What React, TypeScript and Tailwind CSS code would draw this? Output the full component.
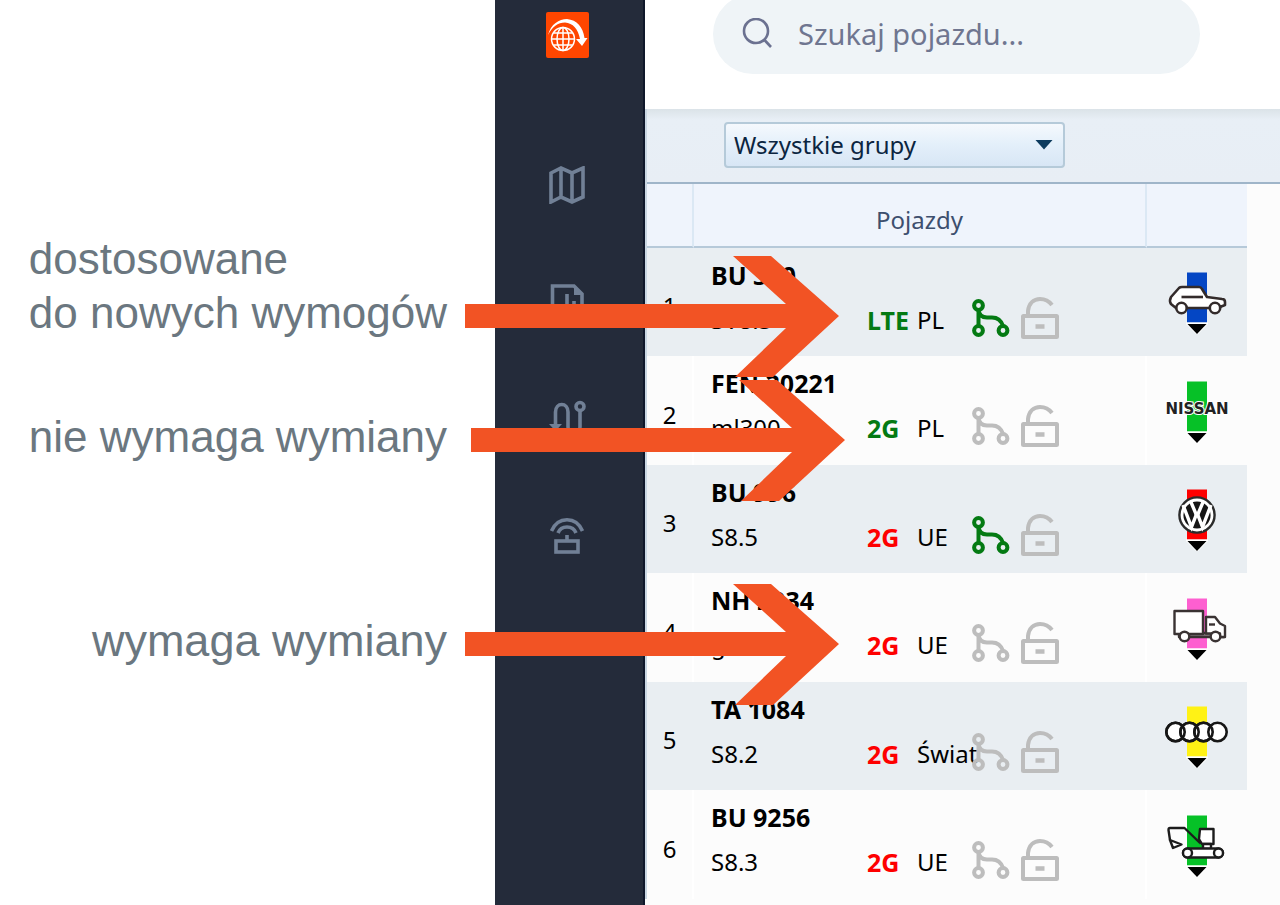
import type { ReactNode } from "react";
import clsx from "clsx";

type Vehicle = {
  name: string;
  model: string;
  network: string;
  region: string;
  ready: boolean;
  shared: boolean;
  color: string;
  icon: ReactNode;
};

const CarIcon = () => (
  <g fill="#fff" stroke="#332b2b" strokeWidth="2.6" strokeLinejoin="round">
    <path d="M14 38 L9 34 Q7 31 9 27 L17 18 Q18 17 20 17 H37 Q39 17 40 19 L45 27 L60 29 Q63 29 63 32 V35 L58 37 L53 38 Z" />
    <path d="M19.500 27 H41" />
    <circle cx="19.500" cy="38" r="5.200" />
    <circle cx="53" cy="38" r="5.200" />
  </g>
);

const NissanIcon = () => (
  <text
    x="35"
    y="35"
    textAnchor="middle"
    fill="#222"
    stroke="#fff"
    strokeWidth="2"
    paintOrder="stroke"
    className="font-['DejaVu_Sans',sans-serif] text-[15px] font-bold"
  >
    NISSAN
  </text>
);

const VolkswagenIcon = () => (
  <g fill="none" stroke="#fff" strokeWidth="3.4">
    <circle cx="35" cy="28" r="17.600" fill="#fff" stroke="#2b2b2b" strokeWidth="2.4" />
    <circle cx="35" cy="28" r="13.600" fill="#151515" stroke="none" />
    <path d="M28.500 14 L34 27 H36 L41.500 14" />
    <path d="M21 18 L29.500 40 L34 28.500 H36 L40.500 40 L49 18" />
  </g>
);

const TruckIcon = () => (
  <g fill="#fff" stroke="#3a3333" strokeWidth="2.4" strokeLinejoin="round">
    <path d="M17 37 H62 V41 H17 Z" fill="#8a8085" />
    <path d="M12.500 15 H41 V38 H12.500 Z" />
    <path d="M44 37.500 V21 H53 L58 27.500 L63 30 V41 H58 V37.500 Z" />
    <path d="M47 28.500 H53" />
    <circle cx="22.500" cy="40.500" r="4.800" />
    <circle cx="53.500" cy="40.500" r="4.800" />
  </g>
);

const AudiIcon = () => (
  <g stroke="#161616" strokeWidth="2.6">
    <g fill="#fff">
      <circle cx="13.500" cy="28" r="9.200" />
      <circle cx="27.500" cy="28" r="9.200" />
      <circle cx="41.500" cy="28" r="9.200" />
      <circle cx="55.500" cy="28" r="9.200" />
    </g>
    <g fill="none">
      <circle cx="13.500" cy="28" r="9.200" />
      <circle cx="27.500" cy="28" r="9.200" />
      <circle cx="41.500" cy="28" r="9.200" />
    </g>
  </g>
);

const DiggerIcon = () => (
  <g fill="#fff" stroke="#1c1c1c" strokeWidth="2.4" strokeLinejoin="round">
    <path d="M8 27 L6.500 17 Q6.500 15 8 15 H22.500 L38 30 L37.500 30" fill="none" />
    <path d="M8 27 L11 35 L19.500 31.500 Z" />
    <path d="M38 16 H51.500 V31 H40 L37 26 Z" />
    <path d="M41 31 H49 V36 H41 Z" />
    <rect x="21" y="35.500" width="40" height="9" rx="4.500" />
    <circle cx="25.500" cy="40" r="4.500" />
    <circle cx="56.500" cy="40" r="4.500" />
  </g>
);

const vehicles: Vehicle[] = [
  { name: "BU 320", model: "SV8.3", network: "LTE", region: "PL", ready: true, shared: true, color: "#0446c4", icon: <CarIcon /> },
  { name: "FEN 20221", model: "ml300", network: "2G", region: "PL", ready: true, shared: false, color: "#06c127", icon: <NissanIcon /> },
  { name: "BU 996", model: "S8.5", network: "2G", region: "UE", ready: false, shared: true, color: "#fe0000", icon: <VolkswagenIcon /> },
  { name: "NH 2034", model: "g500", network: "2G", region: "UE", ready: false, shared: false, color: "#fd5fd0", icon: <TruckIcon /> },
  { name: "TA 1084", model: "S8.2", network: "2G", region: "Świat", ready: false, shared: false, color: "#fff215", icon: <AudiIcon /> },
  { name: "BU 9256", model: "S8.3", network: "2G", region: "UE", ready: false, shared: false, color: "#06c127", icon: <DiggerIcon /> },
];

const Arrow = ({ className }: { className: string }) => (
  <svg
    viewBox="0 0 374 121"
    className={clsx("absolute left-full bottom-[-37px] z-10 w-[374px] h-[121px]", className)}
    aria-hidden="true"
  >
    <path d="M0 48 H321 L268 0 H306 L374 60 L308 121 H270 L321 72 H0 Z" fill="#f25324" />
  </svg>
);

const ShareIcon = ({ active }: { active: boolean }) => (
  <svg
    viewBox="0 0 38 38"
    className={clsx("w-[38px] h-[38px]", active ? "text-[#047a13]" : "text-[#bdbdbd]")}
    fill="none"
    stroke="currentColor"
    strokeWidth="4"
  >
    <circle cx="6.500" cy="6.500" r="4.400" />
    <circle cx="6.500" cy="31.500" r="4.400" />
    <circle cx="31" cy="31.500" r="4.400" />
    <path d="M6.500 11 V27 M6.500 11 C7 16 10 18.500 15 18.500 H20 C26 18.500 29 21 31 27" />
  </svg>
);

const LockIcon = () => (
  <svg viewBox="0 0 38 42" className="w-[38px] h-[42px]" fill="none" stroke="#bdbdbd" strokeWidth="4">
    <rect x="2" y="19" width="34" height="21" rx="0.500" />
    <path d="M7 18 V14 C8 6 13 2 19 2 C24 2 28 4 31 8" />
    <path d="M14.500 29.500 H23.500" strokeWidth="4.500" />
  </svg>
);

const Logo = () => (
  <svg viewBox="0 0 43 46" className="w-[43px] h-[46px]">
    <rect width="43" height="46" rx="2" fill="#ff4600" />
    <g fill="none" stroke="#fff" strokeWidth="1.500">
      <circle cx="17" cy="27" r="11.500" />
      <ellipse cx="17" cy="27" rx="6" ry="11.500" />
      <path d="M17 15.500 V38.500 M5.500 27 H28.500 M7.500 21 H26.500 M7.500 33 H26.500" />
    </g>
    <path d="M2 23 C5 12 13 7 21 7 C31 8 37 15 38.500 26 L41.500 26 L36 34 L30 27 L34 27 C32 17 27 11 19 10.500 C12 10.500 6 15 2 23 Z" fill="#fff" />
  </svg>
);

const navItems = [
  {
    label: "Mapa",
    icon: <path d="M3 7 L13 2 L24 7 L35 2 V31 L24 36 L13 31 L3 36 Z M13 2 V31 M24 7 V36" />,
  },
  {
    label: "Raporty",
    icon: (
      <>
        <path d="M4.500 3 H26 L34 11 V36 H4.500 Z" />
        <path d="M26 2 V12 H35 Z" fill="currentColor" stroke="none" />
        <path d="M12 22 V30 M19 11 V30 M26 18 V30" />
      </>
    ),
  },
  {
    label: "Trasy",
    icon: (
      <>
        <path d="M7.500 27 V12 C7.500 2 20 2 20 12 V27 C20 37 32 37 32 27 V11" />
        <circle cx="32" cy="6.500" r="4" />
        <path d="M1 24 H14 L7.500 31 Z" fill="currentColor" stroke="none" />
      </>
    ),
  },
  {
    label: "Urządzenia",
    icon: (
      <>
        <path d="M3.500 14 C10 -1 28 -1 34.500 14" />
        <path d="M10 16 C13 8 25 8 28 16 M19 18 V24" />
        <rect x="8" y="24" width="22" height="11" />
      </>
    ),
  },
];

const Annotations = () => (
  <aside className="flex w-[495px] shrink-0 flex-col items-end bg-white pt-[232px] pr-12 font-['Liberation_Sans',sans-serif] text-[44px] leading-[54px] text-[#6b7780]">
    <p className="relative whitespace-nowrap">
      dostosowane
      <br />
      do nowych wymogów
      <Arrow className="ml-[18px]" />
    </p>
    <p className="relative mt-[70px] whitespace-nowrap">
      nie wymaga wymiany
      <Arrow className="ml-6" />
    </p>
    <p className="relative mt-[150px] whitespace-nowrap text-[45px]">
      wymaga wymiany
      <Arrow className="ml-[18px]" />
    </p>
  </aside>
);

const Sidebar = () => (
  <nav className="flex w-[150px] shrink-0 flex-col border-r-2 border-[#0f172a] bg-[#242b3a] pr-1">
    <a href="#" aria-label="Start" className="flex h-[109px] justify-center pt-3">
      <Logo />
    </a>
    <div className="flex flex-col pt-[17px]">
      {navItems.map((item) => (
        <a
          key={item.label}
          href="#"
          aria-label={item.label}
          className="flex h-[117px] items-center justify-center text-[#718096]"
        >
          <svg viewBox="0 0 38 38" className="w-[38px] h-[38px]" fill="none" stroke="currentColor" strokeWidth="3.600">
            {item.icon}
          </svg>
        </a>
      ))}
    </div>
  </nav>
);

const Marker = ({ color, children }: { color: string; children: ReactNode }) => (
  <svg viewBox="0 0 70 64" className="mx-auto h-16 w-[70px]">
    <rect x="25" y="2.500" width="20" height="50" fill={color} />
    <path d="M24 52.500 H46 V54 L35 65 L24 54 Z" fill="#fff" />
    <path d="M25.500 54 H44.500 L35 64 Z" fill="#000" />
    {children}
  </svg>
);

const VehicleRow = ({ vehicle, index }: { vehicle: Vehicle; index: number }) => {
  const odd = index % 2 === 0;
  const line = odd ? "border-[#e9eef2]" : "border-white";
  return (
    <tr className={odd ? "h-[108px] bg-[#e9eef2]" : "h-[109px] bg-[#fcfcfc]"}>
      <td className={clsx("border-r-2 pt-2 text-center align-middle", line)}>{index + 1}</td>
      <td className={clsx("border-r-2 pt-[11px] pl-[17px] align-top", line)}>
        <div className="text-[25px] font-bold">{vehicle.name}</div>
        <div className="mt-1.5 flex h-[42px] items-center">
          <span className="w-[156px] shrink-0 pt-1">{vehicle.model}</span>
          <span
            className={clsx(
              "w-[50px] shrink-0 pt-1 text-[25px] font-bold",
              vehicle.ready ? "text-[#047a13]" : "text-[#fe0000]"
            )}
          >
            {vehicle.network}
          </span>
          <span className="w-[55px] shrink-0 pt-1 whitespace-nowrap">{vehicle.region}</span>
          <div className="flex items-center gap-[11px]">
            <ShareIcon active={vehicle.shared} />
            <LockIcon />
          </div>
        </div>
      </td>
      <td>
        <Marker color={vehicle.color}>{vehicle.icon}</Marker>
      </td>
    </tr>
  );
};

const App = () => {
  return (
    <div className="flex min-h-screen overflow-hidden bg-white">
      <Annotations />
      <Sidebar />
      <main className="min-w-0 flex-1 bg-[#fcfcfc] font-['Noto_Sans',sans-serif] text-2xl leading-8 text-black">
        <header className="flow-root h-[109px] bg-white pl-[68px]">
          <label className="-mt-1.5 flex h-20 w-[487px] items-center gap-6 rounded-full bg-[#eff4f7] pl-[29px] text-[#6b7190]">
            <svg viewBox="0 0 32 32" className="h-8 w-8 shrink-0" fill="none" stroke="currentColor" strokeWidth="2.600">
              <circle cx="14" cy="13" r="12" />
              <path d="M22.500 22 L29 29" />
            </svg>
            <input
              type="text"
              placeholder="Szukaj pojazdu..."
              aria-label="Szukaj pojazdu"
              className="w-full bg-transparent text-[29px] leading-10 outline-none placeholder:text-[#6f7690]"
            />
          </label>
        </header>

        <section className="border-l-2 border-[#c9d6e2]">
          <div className="h-[75px] border-b-2 border-[#9fb5c9] bg-linear-to-b from-[#dbe3e8] via-[#e8eff6] via-15% to-[#e8eef5] pt-[13px] pl-[77px]">
            <div className="relative w-[341px]">
              <select
                aria-label="Grupa pojazdów"
                className="h-[46px] w-full appearance-none rounded border-2 border-[#b5cad9] bg-linear-to-b from-[#f5f9fd] via-[#e3effa] via-50% to-[#d8e6f5] px-2 text-[#0b2540]"
              >
                <option>Wszystkie grupy</option>
              </select>
              <svg viewBox="0 0 18 10" className="pointer-events-none absolute top-[18px] right-3 h-2.5 w-[18px]">
                <path d="M0.500 0 H17.500 L9 9.500 Z" fill="#0c3b5e" />
              </svg>
            </div>
          </div>

          <div className="mr-[33px]">
            <table className="w-full table-fixed border-separate border-spacing-0">
              <colgroup>
                <col className="w-[47px]" />
                <col />
                <col className="w-[100px]" />
              </colgroup>
              <thead>
                <tr className="h-16 bg-[#eff4fc] text-[#3d4f6e]">
                  <th className="border-r-2 border-b-2 border-r-[#dbe8f4] border-b-[#b6c9d9]" aria-label="Numer" />
                  <th className="border-r-2 border-b-2 border-r-[#dbe8f4] border-b-[#b6c9d9] pt-2.5 font-normal">
                    Pojazdy
                  </th>
                  <th className="border-b-2 border-b-[#b6c9d9]" aria-label="Marka" />
                </tr>
              </thead>
              <tbody>
                {vehicles.map((vehicle, index) => (
                  <VehicleRow key={vehicle.name} vehicle={vehicle} index={index} />
                ))}
              </tbody>
            </table>
          </div>
        </section>
      </main>
    </div>
  );
};

export default App;
